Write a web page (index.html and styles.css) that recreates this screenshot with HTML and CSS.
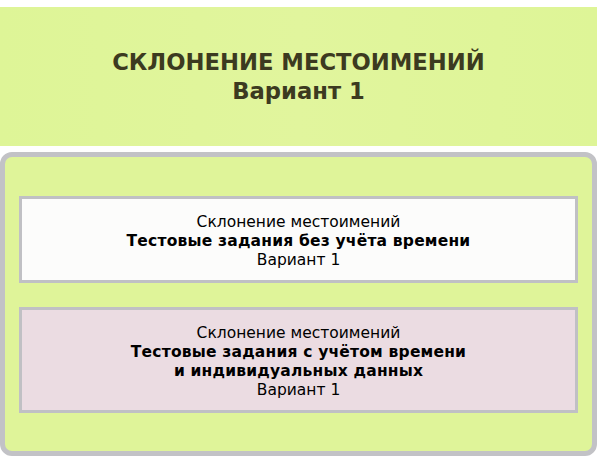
FILE: index.html
```html
<!DOCTYPE html>
<html lang="ru">
<head>
    <meta charset="UTF-8">
    <title>Склонение местоимений. Вариант 1</title>
    <link rel="stylesheet" href="styles.css">
</head>
<body>
    <!-- Заголовок -->
    <div class="title-bar">
        <h1>СКЛОНЕНИЕ МЕСТОИМЕНИЙ<br>Вариант 1</h1>
    </div>

    <!-- Список тестов -->
    <div class="test-list">
        <a class="test-card test-card-plain" href="#">
            Склонение местоимений<br>
            <b>Тестовые задания без учёта времени</b><br>
            Вариант 1
        </a>
        <a class="test-card test-card-timed" href="#">
            Склонение местоимений<br>
            <b>Тестовые задания с учётом времени<br>и индивидуальных данных</b><br>
            Вариант 1
        </a>
    </div>
</body>
</html>
```

FILE: styles.css
```css
/* Основные стили */
body {
    margin: 0;
    padding: 7px 0 0;
    background-color: #fff;
    font-family: Tahoma, "DejaVu Sans", sans-serif;
}

/* Заголовок */
.title-bar {
    width: 597px;
    height: 139px;
    display: flex;
    align-items: center;
    justify-content: center;
    background: linear-gradient(90deg, #def597, #e1f59d 50%, #def597);
}

.title-bar h1 {
    margin: 0;
    font-size: 22.7px;
    line-height: 29px;
    font-weight: bold;
    text-align: center;
    color: #3c3a20;
}

/* Список тестов */
.test-list {
    box-sizing: border-box;
    width: 597px;
    height: 304px;
    margin-top: 6px;
    padding: 39px 14px;
    border: 5px solid #c2c2c6;
    border-radius: 12px;
    background-color: #dff499;
    display: flex;
    flex-direction: column;
    gap: 24px;
}

.test-card {
    display: block;
    padding: 14px 0 10px;
    border: 3px solid #c0c0c4;
    font-size: 15.5px;
    line-height: 19px;
    text-align: center;
    color: #000;
    text-decoration: none;
}

.test-card b {
    letter-spacing: 0.2px;
}

.test-card-plain {
    background-color: #fcfcfb;
}

.test-card-timed {
    background-color: #ebdce2;
}
```
